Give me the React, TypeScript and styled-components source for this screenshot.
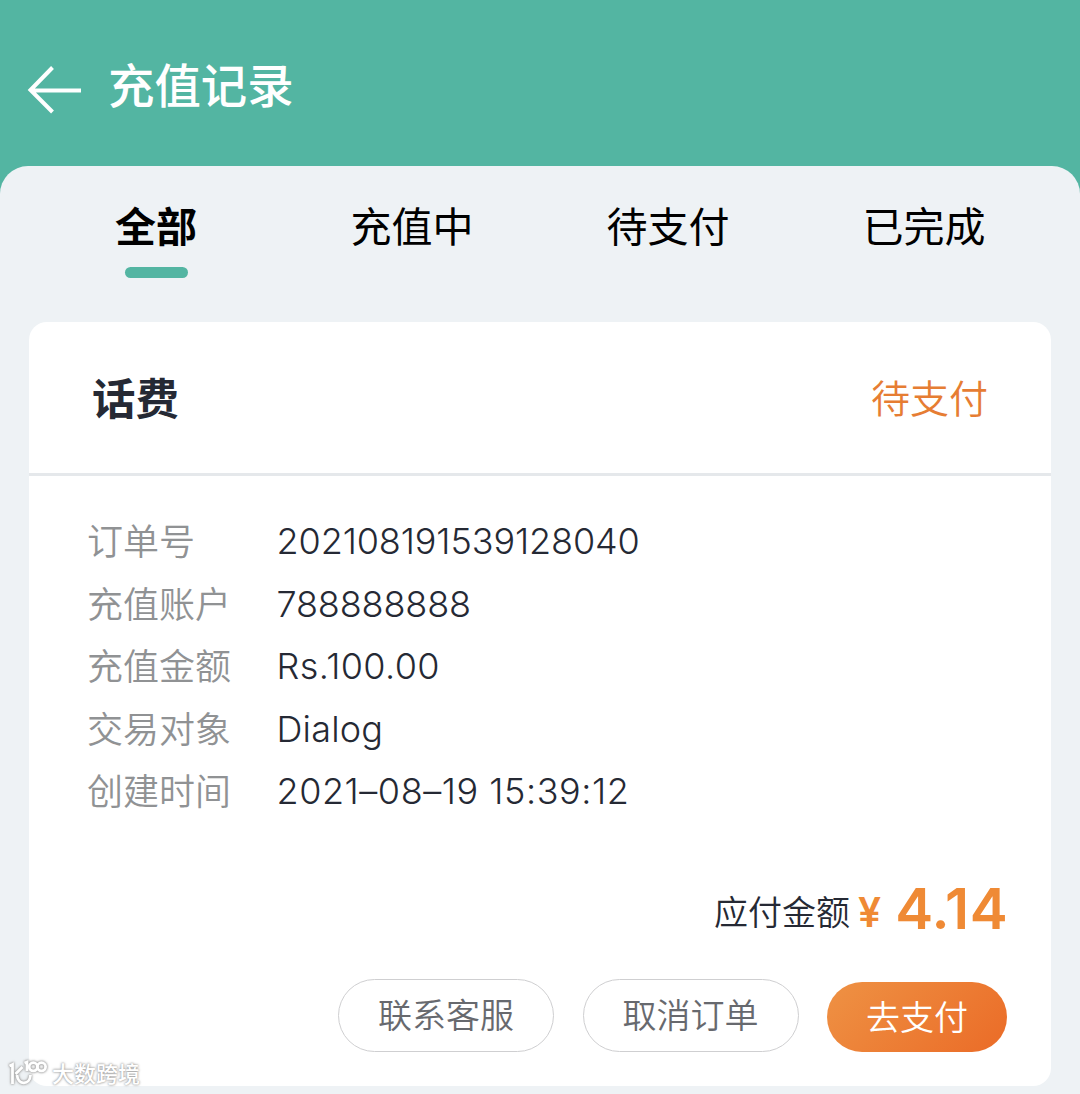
import styled, { createGlobalStyle } from 'styled-components'

const tabs = ['全部', '充值中', '待支付', '已完成']

const details = [
    { label: '订单号', value: '202108191539128040', spacing: -0.1 },
    { label: '充值账户', value: '788888888', spacing: -0.15 },
    { label: '充值金额', value: 'Rs.100.00', spacing: 0.4 },
    { label: '交易对象', value: 'Dialog', spacing: 0.2 },
    { label: '创建时间', value: '2021–08–19 15:39:12', spacing: 0.55 },
]

const App = () => {
    return (
        <Page>
            <GlobalStyle />
            <Header>
                <BackArrow viewBox='0 0 56 50'>
                    <path d='M26.5 2.5 L4.5 25 L26.5 47 M4.5 25.5 H55' />
                </BackArrow>
                <Title>充值记录</Title>
            </Header>
            <Content>
                <Tabs>
                    {tabs.map((tab, i) => (
                        <Tab key={tab} $active={i === 0}>{tab}</Tab>
                    ))}
                </Tabs>
                <Card>
                    <CardHeader>
                        <CardTitle>话费</CardTitle>
                        <Status>待支付</Status>
                    </CardHeader>
                    <Details>
                        {details.map((row) => (
                            <Row key={row.label}>
                                <Label>{row.label}</Label>
                                <Value $spacing={row.spacing}>{row.value}</Value>
                            </Row>
                        ))}
                    </Details>
                    <Total>
                        <TotalLabel>应付金额</TotalLabel>
                        <Currency>¥</Currency>
                        <Amount>4.14</Amount>
                    </Total>
                    <Actions>
                        <Button>联系客服</Button>
                        <Button>取消订单</Button>
                        <Button $primary>去支付</Button>
                    </Actions>
                </Card>
            </Content>
            <Watermark>
                <WatermarkLogo viewBox='0 0 42 30'>
                    <path d='M2.5 9 L5.5 7.5 V27 M15.5 10 L8.5 17 M10 18 C11 29 23 28 23.5 18 M17.5 6 L20 5 V14' />
                    <circle cx='26.3' cy='9.8' r='4.1' />
                    <circle cx='34.5' cy='9.8' r='4.1' />
                </WatermarkLogo>
                <span>大数跨境</span>
            </Watermark>
        </Page>
    )
};

export default App;

const GlobalStyle = createGlobalStyle`
    body {
        margin: 0;
        background: #53b5a2;
        font-family: Inter, 'Noto Sans CJK SC', sans-serif;
    }
`

const Page = styled.div`
    position: relative;
    display: flex;
    flex-direction: column;
    width: 1080px;
    height: 1094px;
    overflow: hidden;
    background: #53b5a2;
`

const Header = styled.header`
    display: flex;
    box-sizing: border-box;
    height: 165.5px;
    padding: 53px 0 0 26px;
    color: #fff;
`

const BackArrow = styled.svg`
    width: 56px;
    height: 50px;
    margin-top: 12px;
    fill: none;
    stroke: #fff;
    stroke-width: 4;
`

const Title = styled.h1`
    margin: 0 0 0 26px;
    font-family: 'Noto Sans CJK SC', sans-serif;
    font-size: 46.4px;
    font-weight: 500;
    line-height: 60px;
`

const Content = styled.main`
    flex: 1;
    padding: 0 29px;
    border-radius: 28px 28px 0 0;
    background: #eef2f5;
`

const Tabs = styled.nav`
    display: flex;
    height: 156.5px;
    margin: 0 -1px;
`

const Tab = styled.div<{ $active: boolean }>`
    display: flex;
    flex: 1;
    flex-direction: column;
    align-items: center;
    padding-top: 28px;
    color: #000;
    font-family: 'Noto Sans CJK SC', sans-serif;
    font-size: 41px;
    font-weight: ${(p) => (p.$active ? 700 : 400)};
    line-height: 60px;

    &::after {
        content: '';
        width: 63px;
        height: 11px;
        margin-top: 13.5px;
        border-radius: 6px;
        background: ${(p) => (p.$active ? '#53b5a2' : 'transparent')};
    }
`

const Card = styled.section`
    display: flex;
    flex-direction: column;
    height: 764px;
    border-radius: 18px;
    background: #fff;
`

const CardHeader = styled.div`
    display: flex;
    box-sizing: border-box;
    align-items: center;
    justify-content: space-between;
    height: 154px;
    padding: 0 63px 4px;
    border-bottom: 3px solid #e5e8eb;
    font-family: 'Noto Sans CJK SC', sans-serif;
`

const CardTitle = styled.h2`
    margin: 2px 0 0;
    color: #252934;
    font-size: 43.5px;
    font-weight: 700;
    line-height: 60px;
`

const Status = styled.span`
    color: #e67d33;
    font-size: 39px;
    font-weight: 350;
    line-height: 60px;
`

const Details = styled.div`
    padding: 32px 58px 0;
`

const Row = styled.div`
    display: flex;
    height: 62.6px;
    font-size: 36px;
    line-height: 62.6px;
`

const Label = styled.span`
    width: 189.5px;
    color: #909294;
    font-family: 'Noto Sans CJK SC', sans-serif;
    font-weight: 350;
`

const Value = styled.span<{ $spacing: number }>`
    padding-top: 2px;
    color: #252934;
    font-weight: 350;
    letter-spacing: ${(p) => p.$spacing}px;
    white-space: nowrap;
`

const Total = styled.div`
    display: flex;
    align-items: center;
    justify-content: flex-end;
    height: 80px;
    margin-top: 48px;
    padding-right: 43px;
    color: #ef8a35;
    line-height: 1;
`

const TotalLabel = styled.span`
    padding-top: 4px;
    color: #252934;
    font-family: 'Noto Sans CJK SC', sans-serif;
    font-size: 34px;
    font-weight: 350;
`

const Currency = styled.span`
    margin: 0 14px 0 8px;
    padding-top: 7px;
    font-size: 41px;
    font-weight: 600;
`

const Amount = styled.span`
    font-size: 57px;
    font-weight: 600;
    letter-spacing: 0.4px;
`

const Actions = styled.div`
    display: flex;
    align-items: center;
    justify-content: flex-end;
    gap: 28.5px;
    margin-top: 30px;
    padding-right: 44px;
`

const Button = styled.button<{ $primary?: boolean }>`
    box-sizing: border-box;
    width: ${(p) => (p.$primary ? 180 : 216)}px;
    height: ${(p) => (p.$primary ? 70 : 73)}px;
    margin: ${(p) => (p.$primary ? '3px 0 0' : '0')};
    padding: 0 0 2px;
    border: ${(p) => (p.$primary ? 'none' : '1px solid #cfcfd1')};
    border-radius: 37px;
    background: ${(p) => (p.$primary ? 'linear-gradient(135deg, #ee8e41 10%, #eb6f2a 90%)' : '#fff')};
    color: ${(p) => (p.$primary ? '#fff' : '#67696e')};
    font-family: 'Noto Sans CJK SC', sans-serif;
    font-size: 34px;
    font-weight: 350;
    line-height: 68px;
`

const Watermark = styled.div`
    position: absolute;
    bottom: 6px;
    left: 7px;
    display: flex;
    align-items: center;
    gap: 3px;
    color: #fff;
    font-family: 'Noto Sans CJK SC', sans-serif;
    font-size: 22px;
    font-weight: 500;
    line-height: 32px;
    text-shadow: 0 0 2px #999, 0 0 3px #aaa;
`

const WatermarkLogo = styled.svg`
    width: 42px;
    height: 30px;
    fill: none;
    stroke: #fff;
    stroke-width: 2.8;
    filter: drop-shadow(0 0 1px #999) drop-shadow(0 0 1px #bbb);
`
